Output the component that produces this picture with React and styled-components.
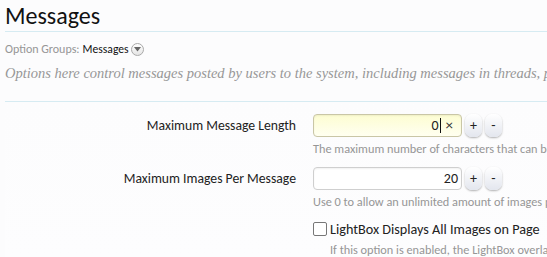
import React from 'react'
import { styled, createGlobalStyle } from 'styled-components'

const GlobalStyle = createGlobalStyle`
  html, body {
    margin: 0;
    background: #fcfcfd;
  }
  body {
    font-family: Carlito, Calibri, Lato, "Open Sans", sans-serif;
    color: #222;
    overflow: hidden;
  }
`

const Page = styled.div`
  width: 547px;
  height: 257px;
  overflow: hidden;
  white-space: nowrap;
`

const Header = styled.div`
  padding: 0 0 0 5px;
`

const Title = styled.h1`
  margin: 0;
  font-size: 24px;
  font-weight: 400;
  line-height: 31px;
  height: 31px;
  color: #111;
  border-bottom: 1px solid #d6ebf2;
`

const Groups = styled.div`
  margin-top: 9px;
  font-size: 12px;
  line-height: 16px;
  color: #969696;
  display: flex;
  align-items: center;
`

const GroupName = styled.span`
  color: #111;
  margin-left: 3px;
  font-size: 11.6px;
`

const Drop = styled.span`
  width: 11px;
  height: 11px;
  margin-left: 2px;
  border-radius: 50%;
  border: 1px solid #a9a9a9;
  background: linear-gradient(#ffffff, #e4e4e4);
  display: inline-flex;
  align-items: center;
  justify-content: center;
`

const Desc = styled.p`
  margin: 7px 0 0;
  font-family: "Liberation Serif", Georgia, serif;
  font-style: italic;
  font-size: 14.5px;
  line-height: 18px;
  color: #979797;
`

const Form = styled.div`
  margin: 19px 0 0 5px;
  padding-top: 12px;
  border-top: 1px solid #d6ebf2;
  background: linear-gradient(#fcfcfd, #fdfdfe);
`

const Row = styled.div`
  display: grid;
  grid-template-columns: 291px 1fr;
  column-gap: 17px;
  margin-bottom: 11px;
`

const Label = styled.div`
  text-align: right;
  font-size: 13.7px;
  line-height: 23px;
  color: #222;
`

const Field = styled.div`
  display: flex;
  flex-direction: column;
  gap: 5px;
`

const Controls = styled.div`
  display: flex;
  align-items: center;
  gap: 3px;
`

const NumberBox = styled.div`
  box-sizing: border-box;
  width: 149px;
  height: 23px;
  border: 1px solid ${p => (p.$focus ? '#c9c6a6' : '#cfcfcf')};
  border-radius: 4px;
  background: ${p => (p.$focus ? 'linear-gradient(#fdfdd2, #fffff0)' : '#ffffff')};
  box-shadow: inset 0 1px 2px rgba(0, 0, 0, 0.06);
  display: flex;
  align-items: center;
  justify-content: flex-end;
  padding-right: ${p => (p.$focus ? '8px' : '3px')};
  font-size: 14px;
  color: #222;
`

const Caret = styled.span`
  width: 1px;
  height: 15px;
  background: #111;
  margin: 0 5px 0 1px;
`

const Clear = styled.span`
  font-size: 15px;
  line-height: 1;
  color: #333;
`

const Spin = styled.button`
  width: 17px;
  height: 23px;
  padding: 0;
  border: none;
  border-radius: 7px;
  background: linear-gradient(#ffffff, #e3e6ee);
  box-shadow: 0 1px 2px rgba(0, 0, 0, 0.3);
  font-family: inherit;
  font-size: 14px;
  color: #222;
  cursor: pointer;
`

const Explain = styled.div`
  font-size: 12.3px;
  line-height: 14px;
  color: #969696;
  padding-left: ${p => (p.$indent ? '17px' : '0')};
`

const Check = styled.label`
  display: flex;
  align-items: center;
  gap: 3px;
  font-size: 14.2px;
  line-height: 18px;
  color: #222;
`

const Box = styled.span`
  box-sizing: border-box;
  width: 14px;
  height: 14px;
  border: 1px solid #777;
  border-radius: 2px;
  background: #fff;
`

const Spinner = () => (
  <>
    <Spin>+</Spin>
    <Spin>-</Spin>
  </>
)

export default function App() {
  return (
    <Page>
      <GlobalStyle />
      <Header>
        <Title>Messages</Title>
        <Groups>
          Option Groups:<GroupName>Messages</GroupName>
          <Drop>
            <svg width="7" height="5" viewBox="0 0 7 5">
              <path d="M0 0h7L3.5 4.5z" fill="#666" />
            </svg>
          </Drop>
        </Groups>
        <Desc>
          Options here control messages posted by users to the system, including messages in threads, private conversations and profile posts.
        </Desc>
      </Header>
      <Form>
        <Row>
          <Label>Maximum Message Length</Label>
          <Field>
            <Controls>
              <NumberBox $focus>
                0<Caret />
                <Clear>×</Clear>
              </NumberBox>
              <Spinner />
            </Controls>
            <Explain>The maximum number of characters that can be used in a single message.</Explain>
          </Field>
        </Row>
        <Row>
          <Label>Maximum Images Per Message</Label>
          <Field>
            <Controls>
              <NumberBox>20</NumberBox>
              <Spinner />
            </Controls>
            <Explain>Use 0 to allow an unlimited amount of images per message.</Explain>
          </Field>
        </Row>
        <Row>
          <Label />
          <Field>
            <Check>
              <Box />
              LightBox Displays All Images on Page
            </Check>
            <Explain $indent>If this option is enabled, the LightBox overlay will show all images on the page.</Explain>
          </Field>
        </Row>
      </Form>
    </Page>
  )
}
